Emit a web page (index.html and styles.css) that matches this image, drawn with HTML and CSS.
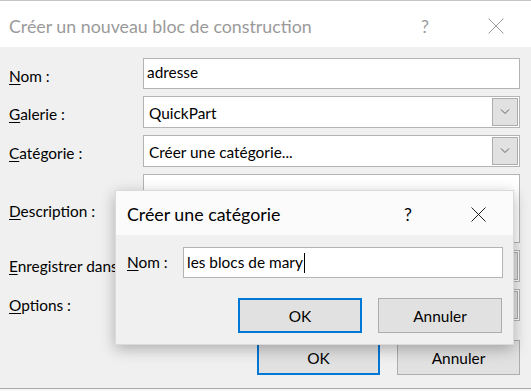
FILE: index.html
```html
<!DOCTYPE html>
<html lang="fr">
<head>
  <meta charset="UTF-8">
  <title>Créer un nouveau bloc de construction</title>
  <link rel="stylesheet" href="styles.css">
</head>
<body>
  <div class="window">
    <div class="titlebar">
      <span class="title">Créer un nouveau bloc de construction</span>
      <span class="help">?</span>
      <span class="close">
        <svg width="16" height="16" viewBox="0 0 16 16"><path d="M0.5 0.5L15.5 15.5M15.5 0.5L0.5 15.5" /></svg>
      </span>
    </div>
    <div class="content">
      <div class="form">
        <label class="lbl"><u>N</u>om :</label>
        <div class="field text">adresse</div>

        <label class="lbl"><u>G</u>alerie :</label>
        <div class="field select">
          <span>QuickPart</span>
          <span class="drop"><svg width="10" height="6" viewBox="0 0 10 6"><path d="M1 0.5L5 4.5L9 0.5" /></svg></span>
        </div>

        <label class="lbl"><u>C</u>atégorie :</label>
        <div class="field select">
          <span>Créer une catégorie...</span>
          <span class="drop"><svg width="10" height="6" viewBox="0 0 10 6"><path d="M1 0.5L5 4.5L9 0.5" /></svg></span>
        </div>

        <label class="lbl lbl-mid"><u>D</u>escription :</label>
        <div class="field area"></div>

        <!-- ces deux lignes sont cachées sous la petite boîte -->
        <label class="lbl lbl-low lbl-cut"><u>E</u>nregistrer dans :</label>
        <div class="field select">
          <span></span>
          <span class="drop"><svg width="10" height="6" viewBox="0 0 10 6"><path d="M1 0.5L5 4.5L9 0.5" /></svg></span>
        </div>

        <label class="lbl lbl-low"><u>O</u>ptions :</label>
        <div class="field select">
          <span></span>
          <span class="drop"><svg width="10" height="6" viewBox="0 0 10 6"><path d="M1 0.5L5 4.5L9 0.5" /></svg></span>
        </div>
      </div>
      <div class="buttons">
        <button class="btn default">OK</button>
        <button class="btn">Annuler</button>
      </div>
    </div>

    <!-- boîte de dialogue ouverte par dessus -->
    <div class="dialog">
      <div class="titlebar small">
        <span class="title">Créer une catégorie</span>
        <span class="help">?</span>
        <span class="close">
          <svg width="15" height="15" viewBox="0 0 15 15"><path d="M0.5 0.5L14.5 14.5M14.5 0.5L0.5 14.5" /></svg>
        </span>
      </div>
      <div class="dialog-body">
        <div class="row">
          <label class="lbl"><u>N</u>om :</label>
          <div class="field text grow">les blocs de mary<span class="caret"></span></div>
        </div>
        <div class="buttons">
          <button class="btn default">OK</button>
          <button class="btn">Annuler</button>
        </div>
      </div>
    </div>
  </div>
</body>
</html>
```
FILE: styles.css
```css
:root {
  --bg: #f0f0f0;
  --line: #adadad;
  --btn: #e1e1e1;
  --blue: #0078d7;
}
* { margin: 0; padding: 0; box-sizing: border-box; }
body {
  font-family: Lato, "Noto Sans", sans-serif;
  font-size: 15.4px;
  line-height: 20px;
  color: #000;
  background: #f7f7f7;
  overflow: hidden;
}
.window {
  position: relative;
  width: 531px;
  height: 389px;
  background: var(--bg);
  border-top: 1px solid #c4c4c4;
  border-bottom: 1px solid #a8a8a8;
}
.titlebar {
  display: flex;
  align-items: center;
  height: 46px;
  padding: 3px 0 0 9px;
  background: #fff;
  color: #9a9a9a;
}
.titlebar .title { flex: 1; font-size: 17.8px; }
.titlebar .help { width: 14px; text-align: center; font-size: 17.8px; margin-right: 56px; }
.titlebar .close { display: flex; margin-right: 27px; }
.titlebar svg path { stroke: #9a9a9a; stroke-width: 1; fill: none; }

.content { padding: 11px 11px 0 9px; }
.form {
  display: grid;
  grid-template-columns: 134px 377px;
  grid-template-rows: 31px 32px 32px 69px 32px 32px;
  row-gap: 7px;
}
.lbl { padding-top: 8px; white-space: nowrap; }
.lbl-mid { align-self: center; padding-top: 4px; }
.lbl-low { padding-top: 6px; }
.lbl-cut { width: 106px; overflow: hidden; }
u { text-underline-offset: 2px; }

.field {
  background: #fff;
  border: 1px solid #b4b4b4;
}
.field.text { padding: 3px 0 0 3px; white-space: nowrap; }
.field.select {
  display: flex;
  align-items: center;
  justify-content: space-between;
  padding: 2px 1px 0 5px;
}
.field.select .drop {
  display: flex;
  align-items: center;
  justify-content: center;
  width: 26px;
  height: 28px;
  margin-top: -2px;
  background: var(--btn);
  border: 1px solid var(--line);
}
.drop svg path { stroke: #606060; stroke-width: 1; fill: none; }

.buttons {
  display: flex;
  justify-content: flex-end;
  gap: 17px;
  margin-top: 19px;
}
.btn {
  width: 123px;
  height: 35px;
  font: inherit;
  background: var(--btn);
  border: 1px solid var(--line);
  color: #000;
}
.btn.default { border: 2px solid var(--blue); }

.dialog {
  position: absolute;
  left: 115px;
  top: 189px;
  width: 399px;
  height: 155px;
  background: var(--bg);
  border: 1px solid #dadada;
  box-shadow: 0 4px 14px rgba(0, 0, 0, 0.28);
}
.titlebar.small {
  height: 44px;
  padding: 2px 0 0 11px;
  color: #000;
  background: #fbfbfb;
}
.titlebar.small .help { margin-right: 56px; }
.titlebar.small .close { margin-right: 27px; }
.titlebar.small svg path { stroke: #222; }

.dialog-body { padding: 12px 10px 0 11px; }
.row { display: flex; }
.row .lbl { width: 56px; padding-top: 5px; }
.row .field { height: 31px; width: 320px; padding-top: 4px; }
.caret {
  display: inline-block;
  width: 1px;
  height: 20px;
  background: #000;
  vertical-align: -5px;
  margin-left: 1px;
}
.dialog .buttons { margin-top: 20px; gap: 16px; padding-right: 1px; }
.dialog .btn { width: 124px; }
```
